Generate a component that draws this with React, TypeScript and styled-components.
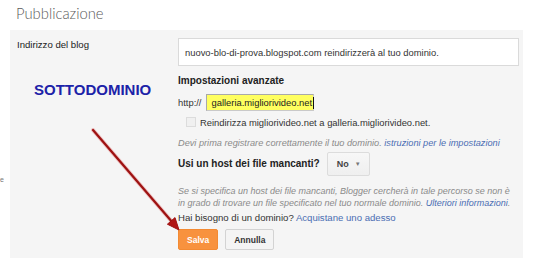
import React from "react";
import styled, { createGlobalStyle } from "styled-components";

const GlobalStyle = createGlobalStyle`
  html, body {
    margin: 0;
    padding: 0;
    background: #fff;
  }
`;

const Page = styled.div`
  position: relative;
  width: 546px;
  height: 266px;
  overflow: hidden;
  background: #fff;
  font-family: "Liberation Sans", Arial, sans-serif;
`;

const Title = styled.h2`
  margin: 0;
  height: 30px;
  box-sizing: border-box;
  padding: 3px 0 0 16px;
  font-family: Lato, "Open Sans", sans-serif;
  font-weight: 300;
  font-size: 14.8px;
  line-height: 20px;
  color: #5a5a5a;
`;

const Panel = styled.div`
  margin: 0 23px 0 10px;
  padding: 8px 4px 8px 7px;
  background: #f5f5f5;
  display: grid;
  grid-template-columns: 161px 1fr;
`;

const Divider = styled.div`
  margin: 8px 0 0 10px;
  border-top: 1px solid #e6e6e6;
`;

const LeftCol = styled.div`
  display: flex;
  flex-direction: column;
  align-items: flex-start;
`;

const Label = styled.div`
  font-size: 9.6px;
  line-height: 14px;
  color: #222;
`;

const Annotation = styled.div`
  margin: 29px 0 0 17px;
  font-size: 15px;
  line-height: 18px;
  font-weight: bold;
  color: #1c22a8;
`;

const RightCol = styled.div`
  display: flex;
  flex-direction: column;
  align-items: flex-start;
`;

const AddressBox = styled.div`
  align-self: stretch;
  height: 28px;
  box-sizing: border-box;
  border: 1px solid #dadada;
  background: #fff;
  padding: 0 6px;
  display: flex;
  align-items: center;
  font-size: 9.4px;
  color: #333;
`;

const SectionTitle = styled.div<{ $mt: number }>`
  margin-top: ${(p) => p.$mt}px;
  font-size: 10px;
  line-height: 14px;
  font-weight: bold;
  color: #222;
`;

const Row = styled.div<{ $mt: number; $gap: number }>`
  margin-top: ${(p) => p.$mt}px;
  display: flex;
  align-items: center;
  gap: ${(p) => p.$gap}px;
  font-size: 9.4px;
  color: #333;
`;

const YellowInput = styled.div`
  width: 108px;
  height: 17px;
  box-sizing: border-box;
  border: 1px solid #a9a9a9;
  border-right-color: #c9c9c9;
  border-bottom-color: #c9c9c9;
  background: #ffff5f;
  padding-left: 4px;
  display: flex;
  align-items: center;
  font-size: 9.4px;
  color: #222;
`;

const Caret = styled.span`
  display: inline-block;
  width: 1px;
  height: 12px;
  margin-left: 1px;
  background: #111;
`;

const CheckRow = styled(Row)`
  height: 12px;
  padding-left: 8px;
`;

const Checkbox = styled.span`
  width: 10px;
  height: 10px;
  box-sizing: border-box;
  border: 1px solid #dcdcdc;
  background: #f0f0f0;
`;

const Note = styled.div<{ $mt: number }>`
  margin-top: ${(p) => p.$mt}px;
  font-size: 9.2px;
  line-height: 12px;
  font-style: italic;
  color: #8a8a8a;
  white-space: nowrap;
`;

const Para = styled(Note)`
  font-size: 9px;
  line-height: 11.5px;
`;

const Link = styled.a`
  color: #4a6db3;
  text-decoration: none;
`;

const SelectButton = styled.div`
  height: 24px;
  box-sizing: border-box;
  padding: 0 8px 0 9px;
  border: 1px solid #dcdcdc;
  border-radius: 2px;
  background: linear-gradient(#f7f7f7, #efefef);
  display: flex;
  align-items: center;
  gap: 6px;
  font-size: 9px;
  font-weight: bold;
  color: #444;
`;

const Arrow = styled.span`
  font-size: 6px;
  color: #777;
`;

const Plain = styled.div<{ $mt: number }>`
  margin-top: ${(p) => p.$mt}px;
  font-size: 9.6px;
  line-height: 12px;
  color: #333;
`;

const ButtonRow = styled.div`
  margin-top: 5px;
  display: flex;
  gap: 7px;
`;

const Button = styled.div<{ $primary?: boolean }>`
  height: 21px;
  box-sizing: border-box;
  padding: 0 8px;
  border-radius: 2px;
  border: 1px solid ${(p) => (p.$primary ? "#f38a32" : "#d3d3d3")};
  background: ${(p) => (p.$primary ? "#f8923e" : "#f4f4f4")};
  color: ${(p) => (p.$primary ? "#fff" : "#333")};
  display: flex;
  align-items: center;
  font-size: 8.5px;
  font-weight: bold;
`;

const Fragment = styled.span`
  position: absolute;
  left: 0;
  top: 176px;
  font-size: 7px;
  color: #777;
`;

const Overlay = styled.svg`
  position: absolute;
  left: 0;
  top: 0;
  pointer-events: none;
`;

export default function App() {
  return (
    <Page>
      <GlobalStyle />
      <Title>Pubblicazione</Title>
      <Panel>
        <LeftCol>
          <Label>Indirizzo del blog</Label>
          <Annotation>SOTTODOMINIO</Annotation>
        </LeftCol>
        <RightCol>
          <AddressBox>
            nuovo-blo-di-prova.blogspot.com reindirizzerà al tuo dominio.
          </AddressBox>
          <SectionTitle $mt={8}>Impostazioni avanzate</SectionTitle>
          <Row $mt={6} $gap={5}>
            <span>http://</span>
            <YellowInput>
              galleria.migliorivideo.net
              <Caret />
            </YellowInput>
          </Row>
          <CheckRow $mt={5} $gap={4}>
            <Checkbox />
            <span>Reindirizza migliorivideo.net a galleria.migliorivideo.net.</span>
          </CheckRow>
          <Note $mt={9}>
            Devi prima registrare correttamente il tuo dominio.{" "}
            <Link>istruzioni per le impostazioni</Link>
          </Note>
          <Row $mt={3} $gap={7}>
            <SectionTitle $mt={0}>Usi un host dei file mancanti?</SectionTitle>
            <SelectButton>
              No <Arrow>▼</Arrow>
            </SelectButton>
          </Row>
          <Para $mt={10}>
            Se si specifica un host dei file mancanti, Blogger cercherà in tale percorso se non è
            <br />
            in grado di trovare un file specificato nel tuo normale dominio.{" "}
            <Link>Ulteriori informazioni</Link>.
          </Para>
          <Plain $mt={3}>
            Hai bisogno di un dominio? <Link>Acquistane uno adesso</Link>
          </Plain>
          <ButtonRow>
            <Button $primary>Salva</Button>
            <Button>Annulla</Button>
          </ButtonRow>
        </RightCol>
      </Panel>
      <Divider />
      <Fragment>e</Fragment>
      <Overlay width="546" height="266" viewBox="0 0 546 266">
        <line x1="93" y1="130" x2="173" y2="223" stroke="#e8a0a0" strokeWidth="4" strokeLinecap="round" opacity="0.6" />
        <line x1="93" y1="130" x2="173" y2="223" stroke="#9e1212" strokeWidth="2.2" strokeLinecap="round" />
        <polygon points="179,230 167.4,224.2 175,217.6" fill="#b01414" stroke="#9e1212" strokeWidth="1" strokeLinejoin="round" />
      </Overlay>
    </Page>
  );
}
